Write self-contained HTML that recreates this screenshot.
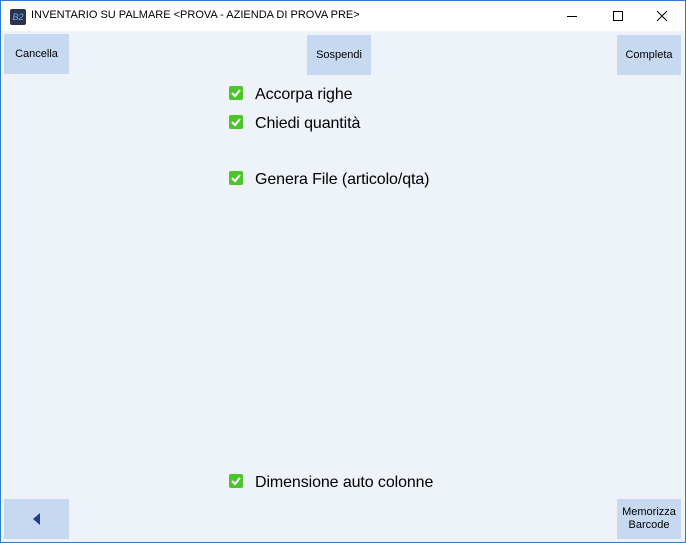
<!DOCTYPE html>
<html><head><style>
*{margin:0;padding:0;box-sizing:border-box}
body{width:686px;height:543px;overflow:hidden;background:#eef2f9;font-family:"Liberation Sans",sans-serif;position:relative}
.win{position:absolute;left:0;top:0;width:686px;height:543px;border:1px solid #2b7dd1}
.title{position:absolute;left:1px;top:1px;width:684px;height:30px;background:#fff}
.title .t{position:absolute;left:30px;top:8px;font-size:11px;color:#000}
.logo{position:absolute;left:9px;top:8px;width:16px;height:16px;background:#2a3350;border-radius:2px;color:#7ab0f0;font-size:9px;font-style:italic;line-height:16px;text-align:center}
.btn{position:absolute;background:#c6d9f1;font-size:11px;color:#000;display:flex;align-items:center;justify-content:center;text-align:center;line-height:13px}
.cb{position:absolute;left:229px;width:14px;height:14px;background:#4cc52c;border-radius:2px}
.cb svg{position:absolute;left:2px;top:2px}
.lbl{position:absolute;left:255px;font-size:16px;color:#000;letter-spacing:-0.1px}
</style></head><body>
<div class="win"></div>
<div class="title"><div class="logo">B2</div><div class="t">INVENTARIO SU PALMARE &lt;PROVA - AZIENDA DI PROVA PRE&gt;</div>
<svg style="position:absolute;left:560px;top:8px" width="120" height="16">
<line x1="6" y1="7.5" x2="16" y2="7.5" stroke="#000"/>
<rect x="52.5" y="2.5" width="9" height="9" fill="none" stroke="#000"/>
<line x1="96" y1="2" x2="106" y2="12" stroke="#000"/><line x1="106" y1="2" x2="96" y2="12" stroke="#000"/>
</svg></div>
<div class="btn" style="left:4px;top:34px;width:65px;height:40px">Cancella</div>
<div class="btn" style="left:307px;top:35px;width:64px;height:40px">Sospendi</div>
<div class="btn" style="left:617px;top:35px;width:64px;height:40px">Completa</div>
<div class="btn" style="left:4px;top:499px;width:65px;height:40px"><svg width="8" height="12"><polygon points="7,0 7,12 0,6" fill="#1f3f8f"/></svg></div>
<div class="btn" style="left:617px;top:499px;width:64px;height:40px">Memorizza<br>Barcode</div>
<div class="cb" style="top:86px"><svg width="10" height="10"><polyline points="1,5 4,8 9,2" fill="none" stroke="#fff" stroke-width="2"/></svg></div>
<div class="lbl" style="top:86px">Accorpa righe</div>
<div class="cb" style="top:115px"><svg width="10" height="10"><polyline points="1,5 4,8 9,2" fill="none" stroke="#fff" stroke-width="2"/></svg></div>
<div class="lbl" style="top:115px">Chiedi quantità</div>
<div class="cb" style="top:171px"><svg width="10" height="10"><polyline points="1,5 4,8 9,2" fill="none" stroke="#fff" stroke-width="2"/></svg></div>
<div class="lbl" style="top:171px">Genera File (articolo/qta)</div>
<div class="cb" style="top:474px"><svg width="10" height="10"><polyline points="1,5 4,8 9,2" fill="none" stroke="#fff" stroke-width="2"/></svg></div>
<div class="lbl" style="top:474px">Dimensione auto colonne</div>
</body></html>
